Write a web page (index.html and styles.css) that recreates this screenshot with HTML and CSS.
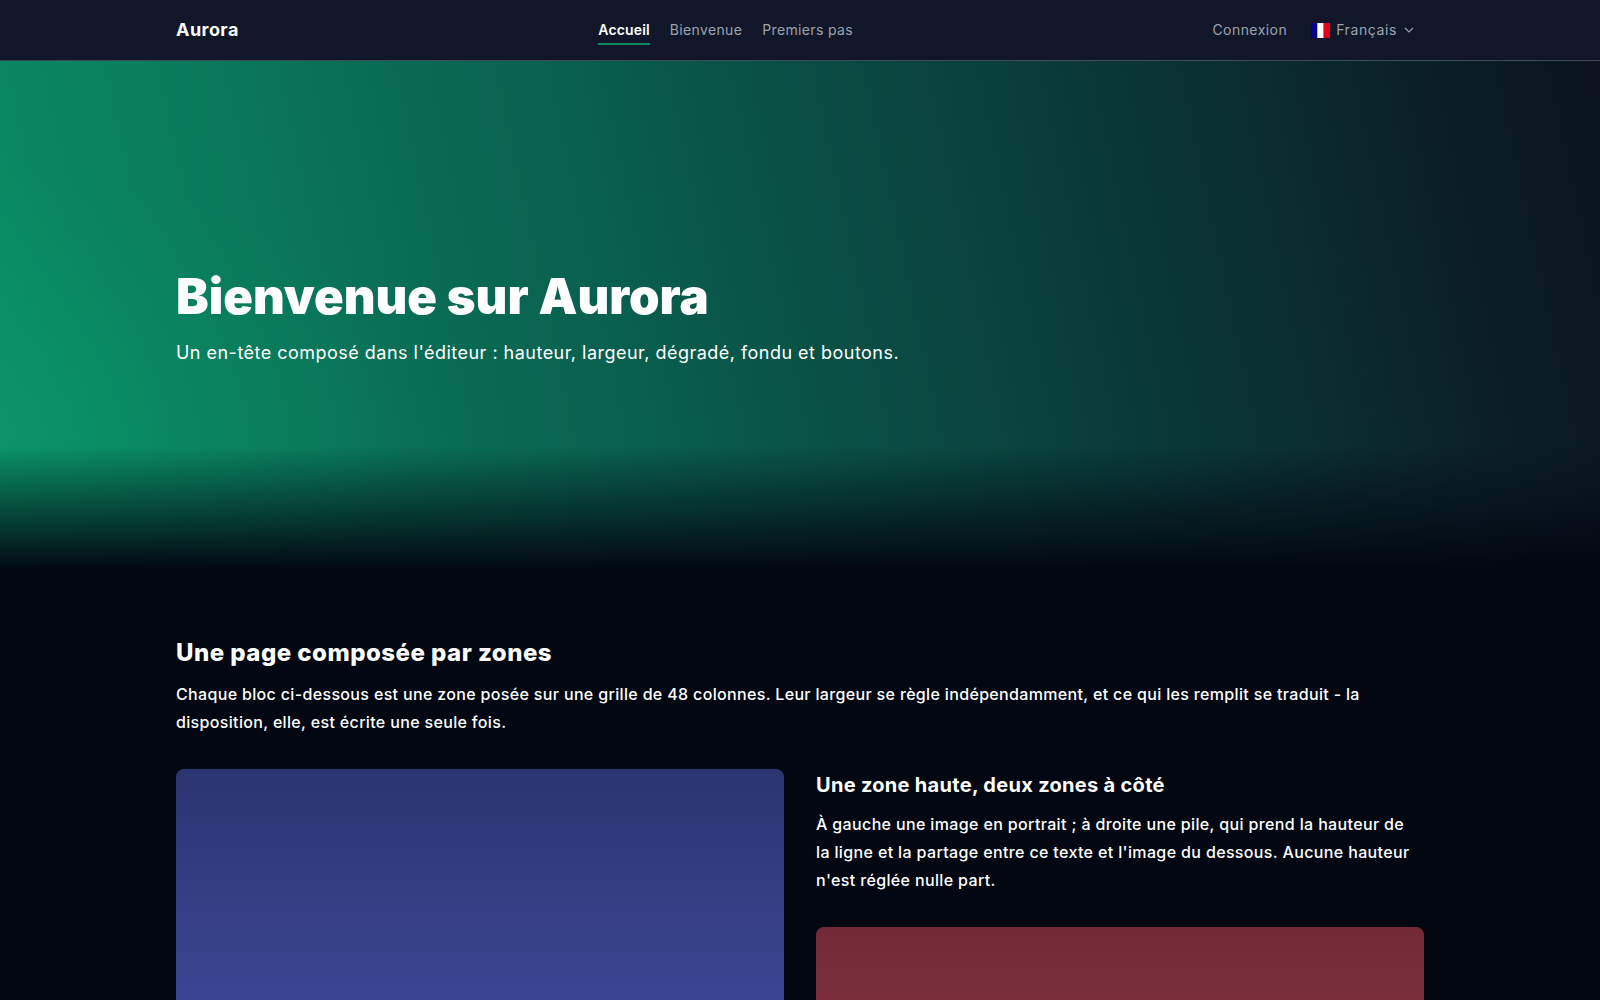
FILE: index.html
```html
<!DOCTYPE html>
<html lang="fr">
<head>
<meta charset="utf-8">
<title>Aurora</title>
<link rel="stylesheet" href="styles.css">
</head>
<body>
<header class="nav">
  <div class="nav-inner">
    <a class="brand" href="#">Aurora</a>
    <nav class="links">
      <a class="link active" href="#">Accueil</a>
      <a class="link" href="#">Bienvenue</a>
      <a class="link" href="#">Premiers pas</a>
    </nav>
    <div class="actions">
      <a class="link" href="#">Connexion</a>
      <button class="lang" type="button">
        <svg class="flag" viewBox="0 0 3 2" width="19" height="15" preserveAspectRatio="none" aria-hidden="true"><rect width="1" height="2" fill="#00008f"/><rect x="1" width="1" height="2" fill="#fff"/><rect x="2" width="1" height="2" fill="#e6001f"/></svg>
        <span>Français</span>
        <svg class="chev" viewBox="0 0 10 10" width="10" height="10" aria-hidden="true"><path d="M1 3 5 7 9 3" fill="none" stroke="currentColor" stroke-width="1.2"/></svg>
      </button>
    </div>
  </div>
</header>
<section class="hero">
  <div class="hero-inner">
    <h1>Bienvenue sur Aurora</h1>
    <p class="sub">Un en-tête composé dans l'éditeur : hauteur, largeur, dégradé, fondu et boutons.</p>
  </div>
</section>
<main class="content">
  <h2>Une page composée par zones</h2>
  <p class="text">Chaque bloc ci-dessous est une zone posée sur une grille de 48 colonnes. Leur largeur se règle indépendamment, et ce qui les remplit se traduit - la disposition, elle, est écrite une seule fois.</p>
  <div class="zones">
    <div class="img img-blue"></div>
    <div class="stack">
      <h3>Une zone haute, deux zones à côté</h3>
      <p class="text text-side">À gauche une image en portrait ; à droite une pile, qui prend la hauteur de la ligne et la partage entre ce texte et l'image du dessous. Aucune hauteur n'est réglée nulle part.</p>
      <div class="img img-red"></div>
    </div>
  </div>
</main>
</body>
</html>
```
FILE: styles.css
```css
* { box-sizing: border-box; }
html, body { margin: 0; padding: 0; }
body {
  background: #020711;
  color: #fff;
  font-family: Inter, "Noto Sans", sans-serif;
  height: 1000px;
  overflow: hidden;
}
a { color: inherit; text-decoration: none; }

.nav {
  height: 61px;
  background: #111729;
  border-bottom: 1px solid #3d4b55;
}
.nav-inner {
  width: 1248px;
  height: 60px;
  margin: 0 auto;
  display: flex;
  justify-content: space-between;
  align-items: center;
}
.brand { font-size: 18px; font-weight: 700; letter-spacing: 0.45px; padding-bottom: 2px; }
.links { display: flex; gap: 20px; align-items: center; }
.link {
  display: block;
  font-size: 14px;
  line-height: 20px;
  color: #9ca3af;
  letter-spacing: 0.35px;
}
.links .link {
  padding: 5px 0 3px;
  border-bottom: 2px solid transparent;
}
.links .link.active {
  color: #fff;
  font-weight: 600;
  border-bottom-color: #10895f;
  letter-spacing: 0.15px;
}
.actions { display: flex; align-items: center; gap: 24px; padding-right: 10px; }
.actions .link { letter-spacing: 0.45px; }
.lang {
  display: flex;
  align-items: center;
  gap: 6px;
  height: 20px;
  background: none;
  border: 0;
  padding: 0;
  color: #9ca3af;
  font: inherit;
  font-size: 14px;
  line-height: 20px;
  letter-spacing: 0.6px;
}
.chev { margin-left: 1px; }

.hero {
  height: 510px;
  background:
    linear-gradient(180deg, rgba(2,7,17,0) 0, rgba(2,7,17,0) 385px, #020711 510px),
    radial-gradient(ellipse 420px 260px at 0 370px, rgba(10,170,115,0.25), rgba(10,170,115,0)),
    linear-gradient(78deg, #0a8f66 0%, #09584a 45%, #0b1220 100%);
  display: flex;
  align-items: center;
}
.hero-inner { width: 1248px; margin: 0 auto; padding-top: 2px; }
h1 { margin: 0; font-size: 49px; line-height: 60px; font-weight: 900; letter-spacing: 0; }
.sub { margin: 12px 0 0; font-size: 18px; line-height: 28px; letter-spacing: 0.48px; }

.content { width: 1248px; margin: 0 auto; padding-top: 66px; }
h2 { margin: 0 0 11px; font-size: 24px; line-height: 32px; font-weight: 800; letter-spacing: 0.48px; }
.text { margin: 0; font-size: 16px; line-height: 28px; font-weight: 500; letter-spacing: 0.34px; }
.text-side { padding-right: 8px; letter-spacing: 0.36px; }
.zones { display: grid; grid-template-columns: 608px 608px; gap: 32px; margin-top: 33px; }
.img { border-radius: 8px; }
.img-blue { height: 760px; background: linear-gradient(180deg, #2c3470 0, #576ee0 100%); }
.stack { display: flex; flex-direction: column; }
h3 { margin: 0 0 9px; font-size: 20px; line-height: 32px; font-weight: 700; letter-spacing: 0.3px; }
.img-red { margin-top: 33px; height: 400px; background: linear-gradient(180deg, #722a37 0, #9e4052 100%); }
```
